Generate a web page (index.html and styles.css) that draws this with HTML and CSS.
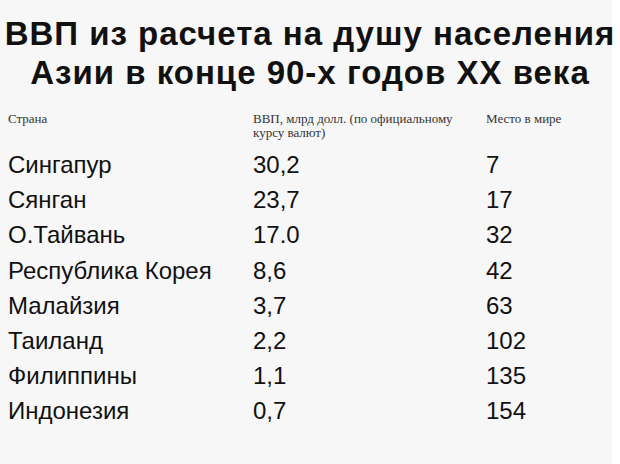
FILE: index.html
```html
<!DOCTYPE html>
<html lang="ru">
<head>
<meta charset="utf-8">
<link rel="stylesheet" href="styles.css">
</head>
<body>
<div class="page">
  <h1 class="title">ВВП из расчета на душу населения<br>Азии в конце 90-х годов XX века</h1>
  <div class="table">
    <div class="head">Страна</div>
    <div class="head head-wide">ВВП, млрд долл. (по официальному курсу валют)</div>
    <div class="head">Место в мире</div>

    <div class="cell">Сингапур</div><div class="cell">30,2</div><div class="cell">7</div>
    <div class="cell">Сянган</div><div class="cell">23,7</div><div class="cell">17</div>
    <div class="cell">О.Тайвань</div><div class="cell">17.0</div><div class="cell">32</div>
    <div class="cell">Республика Корея</div><div class="cell">8,6</div><div class="cell">42</div>
    <div class="cell">Малайзия</div><div class="cell">3,7</div><div class="cell">63</div>
    <div class="cell">Таиланд</div><div class="cell">2,2</div><div class="cell">102</div>
    <div class="cell">Филиппины</div><div class="cell">1,1</div><div class="cell">135</div>
    <div class="cell">Индонезия</div><div class="cell">0,7</div><div class="cell">154</div>
  </div>
</div>
</body>
</html>
```
FILE: styles.css
```css
html, body {
  margin: 0;
  padding: 0;
  background: #ffffff;
}
.page {
  width: 612px;
  height: 464px;
  background: #f7f7f7;
  box-sizing: border-box;
  padding-top: 14px;
}
.title {
  margin: 0;
  font-family: "Liberation Sans", Arial, sans-serif;
  font-weight: bold;
  font-size: 33px;
  line-height: 39px;
  letter-spacing: 1px;
  text-align: center;
  color: #111;
  width: 620px;
}
.table {
  display: grid;
  grid-template-columns: 245px 233px 1fr;
  padding-left: 8px;
  margin-top: 20px;
}
.head {
  font-family: "Liberation Serif", "Times New Roman", serif;
  font-size: 13px;
  line-height: 14px;
  color: #333;
  height: 35px;
}
.head-wide {
  width: 215px;
}
.cell {
  font-family: "Liberation Sans", Arial, sans-serif;
  font-size: 24px;
  line-height: 35.2px;
  color: #111;
  white-space: nowrap;
}
```
